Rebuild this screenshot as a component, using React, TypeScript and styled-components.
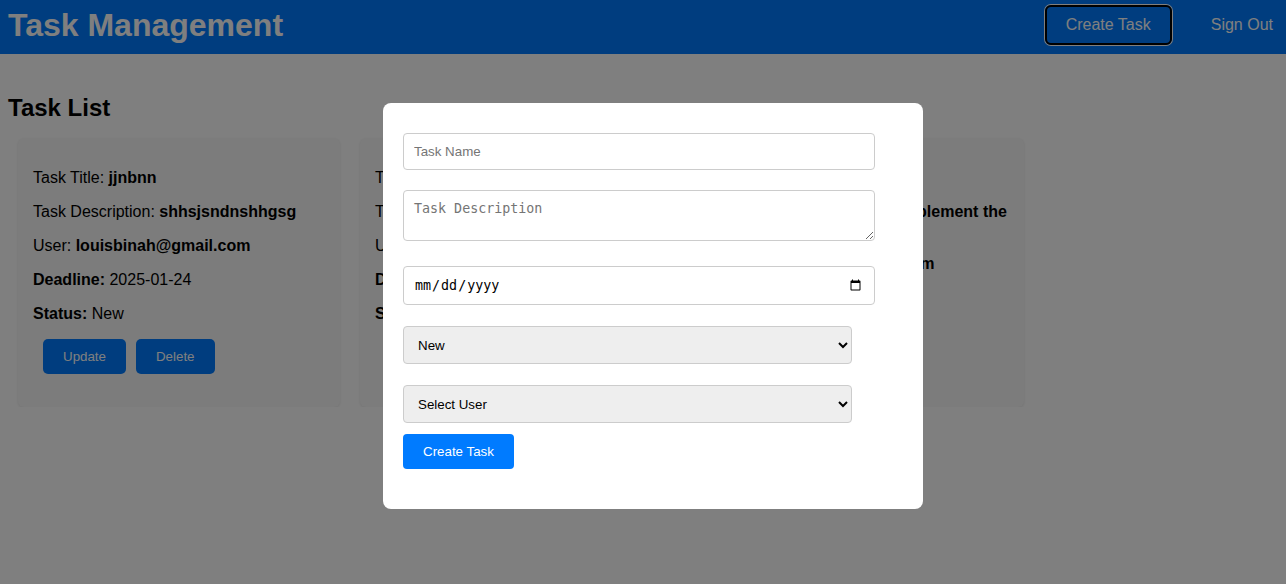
import React from "react";
import styled, { createGlobalStyle } from "styled-components";

const GlobalStyle = createGlobalStyle`
  * { box-sizing: border-box; }
  body {
    margin: 0;
    background: #ffffff;
    font-family: "Liberation Sans", Arial, sans-serif;
    color: #000;
  }
`;

const Header = styled.header`
  display: flex;
  align-items: center;
  justify-content: space-between;
  background: #007bff;
  height: 54px;
  padding: 5px 8px 9px 8px;
`;

const Brand = styled.h1`
  margin: 0;
  font-size: 32px;
  font-weight: bold;
  color: #ffffff;
`;

const Nav = styled.nav`
  display: flex;
  align-items: center;
`;

const NavButton = styled.button<{ $focused?: boolean }>`
  font-family: "Liberation Sans", Arial, sans-serif;
  font-size: 16px;
  line-height: 18px;
  color: #ffffff;
  background: transparent;
  cursor: pointer;
  border-radius: 6px;
  border: ${(p) => (p.$focused ? "2px solid #000" : "none")};
  box-shadow: ${(p) => (p.$focused ? "0 0 0 1px #ffffff" : "none")};
  padding: ${(p) => (p.$focused ? "9px 19px" : "10px 5px")};
  margin: ${(p) => (p.$focused ? "0 1px" : "0 0 0 33px")};
`;

const Main = styled.main`
  padding: 0 8px;
`;

const SectionTitle = styled.h2`
  margin: 40px 0 0 0;
  font-size: 24px;
  font-weight: bold;
`;

const CardList = styled.div`
  display: flex;
  gap: 20px;
  margin-top: 16px;
  padding: 0 10px;
`;

const Card = styled.div`
  width: 322px;
  flex: 0 0 322px;
  background: #f8f8f8;
  border-radius: 6px;
  box-shadow: 0 1px 3px rgba(0, 0, 0, 0.1);
  padding: 15px;
`;

const Line = styled.p`
  margin: 16px 0;
  font-size: 16px;
`;

const Actions = styled.div`
  display: flex;
  gap: 10px;
  margin-left: 10px;
`;

const ActionButton = styled.button`
  font-family: "Liberation Sans", Arial, sans-serif;
  font-size: 13.33px;
  line-height: 15px;
  padding: 10px 20px;
  border: none;
  border-radius: 5px;
  background: #007bff;
  color: #ffffff;
`;

const Overlay = styled.div`
  position: fixed;
  inset: 0;
  background: rgba(0, 0, 0, 0.5);
  display: flex;
  align-items: center;
  justify-content: center;
  padding: 28px 0 0 20px;
`;

const Modal = styled.div`
  width: 540px;
  background: #ffffff;
  border-radius: 8px;
  padding: 30px 20px 40px 20px;
`;

const Form = styled.form`
  display: flex;
  flex-direction: column;
  align-items: flex-start;
`;

const TextInput = styled.input<{ $mt?: number }>`
  width: 472px;
  height: 37px;
  margin-top: ${(p) => p.$mt ?? 0}px;
  padding: 10px;
  border: 1px solid #ccc;
  border-radius: 4px;
  font-family: "Liberation Sans", Arial, sans-serif;
  font-size: 13.33px;
  &::placeholder { color: #757575; }
`;

const DateInput = styled.input<{ $mt?: number }>`
  width: 472px;
  height: 39px;
  margin-top: ${(p) => p.$mt ?? 0}px;
  padding: 10px;
  border: 1px solid #ccc;
  border-radius: 4px;
  font-family: "DejaVu Sans Mono", monospace;
  font-size: 13.33px;
  color: #000;
  background: #fff;
`;

const TextArea = styled.textarea<{ $mt?: number }>`
  width: 472px;
  height: 51px;
  margin-top: ${(p) => p.$mt ?? 0}px;
  padding: 10px;
  border: 1px solid #ccc;
  border-radius: 4px;
  font-family: "DejaVu Sans Mono", monospace;
  font-size: 13.33px;
  &::placeholder { color: #757575; }
`;

const Select = styled.select<{ $mt?: number }>`
  width: 449px;
  height: 38px;
  margin-top: ${(p) => p.$mt ?? 0}px;
  padding: 0 10px;
  border: 1px solid #ccc;
  border-radius: 4px;
  background: #eeeeee;
  color: #000;
  font-family: "Liberation Sans", Arial, sans-serif;
  font-size: 13.33px;
`;

const SubmitButton = styled.button`
  margin-top: 11px;
  font-family: "Liberation Sans", Arial, sans-serif;
  font-size: 13.33px;
  line-height: 15px;
  padding: 10px 20px;
  border: none;
  border-radius: 4px;
  background: #007bff;
  color: #ffffff;
`;

type Task = {
  title: string;
  description: string;
  user: string;
  deadline: string;
  status: string;
};

const tasks: Task[] = [
  {
    title: "jjnbnn",
    description: "shhsjsndnshhgsg",
    user: "louisbinah@gmail.com",
    deadline: "2025-01-24",
    status: "New",
  },
  {
    title: "Design",
    description: "Login page",
    user: "louisbinah@gmail.com",
    deadline: "2025-01-28",
    status: "New",
  },
  {
    title: "Backend",
    description: "Please implement the API",
    user: "louisbinah@gmail.com",
    deadline: "2025-02-02",
    status: "New",
  },
];

function TaskCard({ task }: { task: Task }) {
  return (
    <Card>
      <Line>
        Task Title: <strong>{task.title}</strong>
      </Line>
      <Line>
        Task Description: <strong>{task.description}</strong>
      </Line>
      <Line>
        User: <strong>{task.user}</strong>
      </Line>
      <Line>
        <strong>Deadline:</strong> {task.deadline}
      </Line>
      <Line>
        <strong>Status:</strong> {task.status}
      </Line>
      <Actions>
        <ActionButton>Update</ActionButton>
        <ActionButton>Delete</ActionButton>
      </Actions>
    </Card>
  );
}

export default function App() {
  return (
    <>
      <GlobalStyle />
      <Header>
        <Brand>Task Management</Brand>
        <Nav>
          <NavButton $focused>Create Task</NavButton>
          <NavButton>Sign Out</NavButton>
        </Nav>
      </Header>
      <Main>
        <SectionTitle>Task List</SectionTitle>
        <CardList>
          {tasks.map((t, i) => (
            <TaskCard key={i} task={t} />
          ))}
        </CardList>
      </Main>
      <Overlay>
        <Modal>
          <Form onSubmit={(e) => e.preventDefault()}>
            <TextInput type="text" placeholder="Task Name" />
            <TextArea $mt={20} placeholder="Task Description" />
            <DateInput $mt={25} type="date" />
            <Select $mt={21} defaultValue="New">
              <option value="New">New</option>
              <option value="In Progress">In Progress</option>
              <option value="Completed">Completed</option>
            </Select>
            <Select $mt={21} defaultValue="">
              <option value="">Select User</option>
              <option value="louisbinah@gmail.com">louisbinah@gmail.com</option>
            </Select>
            <SubmitButton type="submit">Create Task</SubmitButton>
          </Form>
        </Modal>
      </Overlay>
    </>
  );
}
